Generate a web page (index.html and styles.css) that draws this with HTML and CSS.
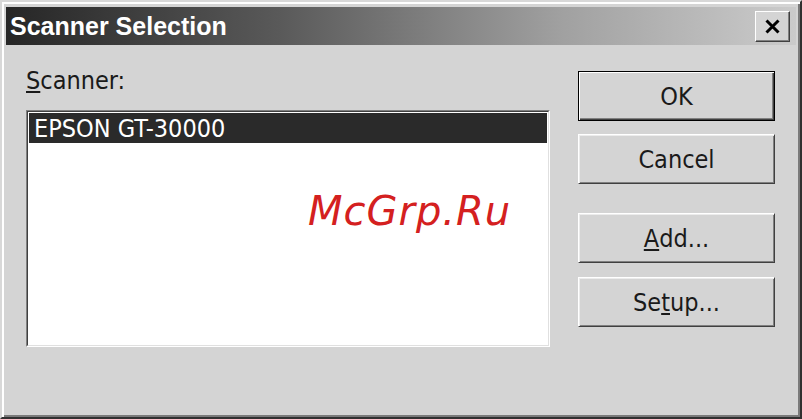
FILE: index.html
```html
<!DOCTYPE html>
<html lang="en">
<head>
<meta charset="utf-8">
<title>Scanner Selection</title>
<link rel="stylesheet" href="styles.css">
</head>
<body>
<div class="window">
  <div class="titlebar">
    <span class="title">Scanner Selection</span>
    <button class="close" aria-label="Close">
      <svg width="15" height="15" viewBox="0 0 15 15"><path d="M1.5 1.5 L13.5 13.5 M13.5 1.5 L1.5 13.5" stroke="#000" stroke-width="3" fill="none"/></svg>
    </button>
  </div>
  <div class="content">
    <div class="left">
      <div class="label"><u>S</u>canner:</div>
      <div class="listbox">
        <div class="listbox-inner">
          <div class="item selected">EPSON GT-30000</div>
        </div>
      </div>
    </div>
    <div class="buttons">
      <div class="btn default">OK</div>
      <div class="btn cancel">Cancel</div>
      <div class="btn add"><u>A</u>dd...</div>
      <div class="btn setup">Se<u>t</u>up...</div>
    </div>
  </div>
  <div class="watermark">McGrp.Ru</div>
</div>
</body>
</html>
```

FILE: styles.css
```css
html, body {
  margin: 0;
  padding: 0;
  background: #d4d4d4;
}

.window {
  position: relative;
  box-sizing: border-box;
  width: 802px;
  height: 419px;
  display: flex;
  flex-direction: column;
  background: #d4d4d4;
  border: 2px solid;
  border-color: #d8d8d8 #303030 #303030 #d8d8d8;
  box-shadow: inset 2px 2px #ffffff, inset -2px -2px #7a7a7a;
  padding: 5px 4px 4px 4px;
  font-family: "DejaVu Sans Condensed", "Liberation Sans", sans-serif;
  color: #111;
}

.titlebar {
  height: 38px;
  flex: none;
  display: flex;
  align-items: flex-start;
  background: linear-gradient(to right, #262626 0%, #5a5a5a 35%, #a0a0a0 70%, #cbcbcb 100%);
}

.title {
  font-family: "Liberation Sans", sans-serif;
  font-weight: bold;
  font-size: 25px;
  line-height: 38px;
  color: #ffffff;
  padding-left: 4px;
}

.close {
  margin: 4px 6px 0 auto;
  width: 35px;
  height: 31px;
  padding: 0;
  box-sizing: border-box;
  display: flex;
  align-items: center;
  justify-content: center;
  background: #d4d4d4;
  border: 1px solid;
  border-color: #ffffff #404040 #404040 #ffffff;
  box-shadow: inset -1px -1px #808080;
}

.close svg {
  display: block;
  margin: 0 1px 1px 0;
}

.content {
  flex: 1;
  display: flex;
}

.left {
  padding-left: 20px;
  padding-top: 21px;
}

.label {
  font-size: 25px;
  line-height: 30px;
  color: #1a1a1a;
  margin-bottom: 14px;
}

.listbox {
  box-sizing: border-box;
  width: 524px;
  height: 237px;
  border: 1px solid;
  border-color: #808080 #ffffff #ffffff #808080;
}

.listbox-inner {
  box-sizing: border-box;
  height: 100%;
  border: 1px solid;
  border-color: #404040 #e0e0e0 #e0e0e0 #404040;
  background: #ffffff;
  padding: 1px;
}

.item {
  height: 30px;
  font-size: 25px;
  line-height: 32px;
  padding-left: 5px;
}

.item.selected {
  background: #2a2a2a;
  color: #ffffff;
}

.buttons {
  margin-left: auto;
  margin-right: 21px;
  padding-top: 26px;
  width: 197px;
  display: flex;
  flex-direction: column;
}

.btn {
  box-sizing: border-box;
  height: 50px;
  display: flex;
  align-items: center;
  justify-content: center;
  font-size: 25px;
  color: #1a1a1a;
  background: #d4d4d4;
  border: 1px solid;
  border-color: #ffffff #404040 #404040 #ffffff;
  box-shadow: inset 1px 1px #ececec, inset -1px -1px #808080;
}

.btn.default {
  border: 1px solid #000;
  box-shadow: inset 1px 1px #ffffff, inset -1px -1px #404040, inset -2px -2px #808080;
}

.btn.cancel { margin-top: 13px; }
.btn.add { margin-top: 29px; }
.btn.setup { margin-top: 14px; }

.watermark {
  position: absolute;
  left: 306px;
  top: 189px;
  font-family: "DejaVu Sans", sans-serif;
  font-style: italic;
  font-size: 40px;
  line-height: 40px;
  letter-spacing: 1px;
  color: #d42020;
}
```
